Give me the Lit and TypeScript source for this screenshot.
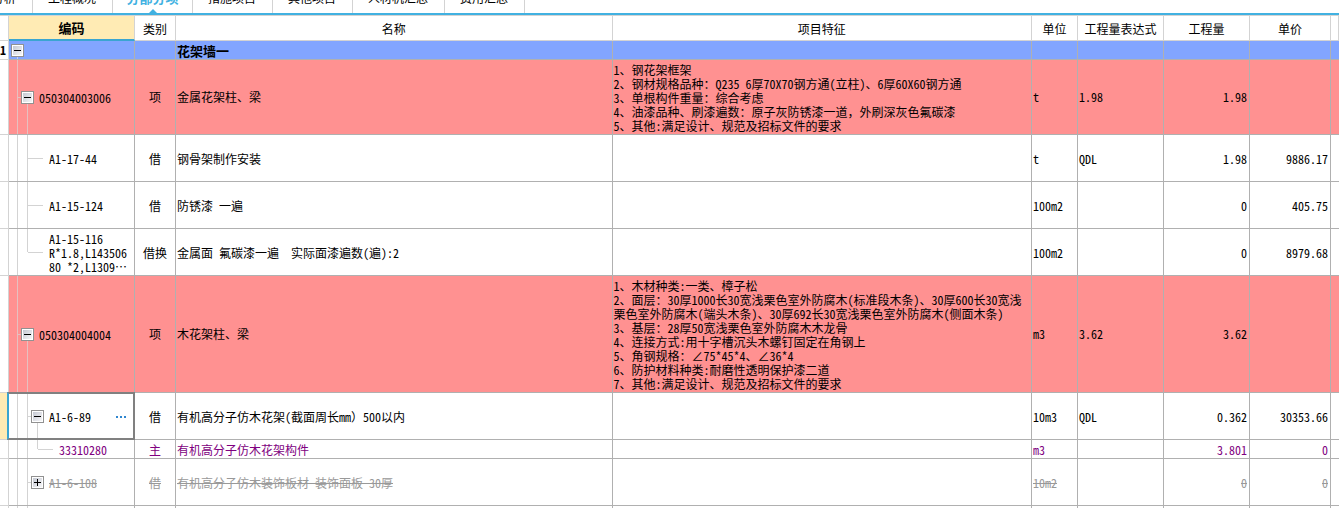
import { LitElement, html, svg, css, nothing } from "lit";
import { customElement, property } from "lit/decorators.js";
import { classMap } from "lit/directives/class-map.js";

type Toggle = "open" | "closed" | "none";

interface Item {
  code: string;
  level: number;
  toggle: Toggle;
  guides: string;
  kind?: string;
  name?: string;
  feature?: string;
  unit?: string;
  expr?: string;
  qty?: string;
  price?: string;
  tone?: string;
  rowNo?: string;
  size: string;
}

const TABS = ["造价分析", "工程概况", "分部分项", "措施项目", "其他项目", "人材机汇总", "费用汇总"];

const HEADERS = ["类别", "名称", "项目特征", "单位", "工程量表达式", "工程量", "单价"];

const ITEMS: Item[] = [
  { code: "", level: 0, toggle: "open", guides: "root", name: "花架墙一", tone: "section", rowNo: "1", size: "short" },
  {
    code: "050304003006", level: 1, toggle: "open", guides: "group", kind: "项", name: "金属花架柱、梁",
    feature:
      "1、钢花架框架\n2、钢材规格品种：Q235 6厚70X70钢方通(立柱)、6厚60X60钢方通\n3、单根构件重量：综合考虑\n4、油漆品种、刷漆遍数：原子灰防锈漆一道，外刷深灰色氟碳漆\n5、其他:满足设计、规范及招标文件的要求",
    unit: "t", expr: "1.98", qty: "1.98", tone: "bill", size: "tall",
  },
  { code: "A1-17-44", level: 2, toggle: "none", guides: "leaf", kind: "借", name: "钢骨架制作安装", unit: "t", expr: "QDL", qty: "1.98", price: "9886.17", size: "mid" },
  { code: "A1-15-124", level: 2, toggle: "none", guides: "leaf", kind: "借", name: "防锈漆 一遍", unit: "100m2", qty: "0", price: "405.75", size: "mid" },
  { code: "A1-15-116\nR*1.8,L14350680 *2,L1309…", level: 2, toggle: "none", guides: "last", kind: "借换", name: "金属面 氟碳漆一遍  实际面漆遍数(遍):2", unit: "100m2", qty: "0", price: "8979.68", size: "mid" },
  {
    code: "050304004004", level: 1, toggle: "open", guides: "group", kind: "项", name: "木花架柱、梁",
    feature:
      "1、木材种类:一类、樟子松\n2、面层：30厚1000长30宽浅栗色室外防腐木(标准段木条)、30厚600长30宽浅栗色室外防腐木(端头木条)、30厚692长30宽浅栗色室外防腐木(侧面木条)\n3、基层：28厚50宽浅栗色室外防腐木木龙骨\n4、连接方式:用十字槽沉头木螺钉固定在角钢上\n5、角钢规格：∠75*45*4、∠36*4\n6、防护材料种类:耐磨性透明保护漆二道\n7、其他:满足设计、规范及招标文件的要求",
    unit: "m3", expr: "3.62", qty: "3.62", tone: "bill", size: "tall",
  },
  { code: "A1-6-89", level: 2, toggle: "open", guides: "branch", kind: "借", name: "有机高分子仿木花架(截面周长mm）500以内", unit: "10m3", expr: "QDL", qty: "0.362", price: "30353.66", tone: "selected", size: "mid" },
  { code: "33310280", level: 3, toggle: "none", guides: "deep", kind: "主", name: "有机高分子仿木花架构件", unit: "m3", qty: "3.801", price: "0", tone: "main", size: "short" },
  { code: "A1-6-108", level: 2, toggle: "closed", guides: "twig", kind: "借", name: "有机高分子仿木装饰板材 装饰面板 30厚", unit: "10m2", qty: "0", price: "0", tone: "removed", size: "mid" },
  { code: "", level: 2, toggle: "none", guides: "pass", size: "mid" },
];

/* Full-width punctuation keeps its full advance; everything else uses half-width Latin forms. */
const mixed = (text = "") =>
  text.split(/([，）])/).map((part) => (/^[，）]$/.test(part) ? html`<span class="full">${part}</span>` : part));

@customElement("tree-toggle")
class TreeToggle extends LitElement {
  @property() state: Toggle = "open";

  static styles = css`
    :host {
      display: block;
      flex: none;
      white-space: normal;
    }
    .box {
      display: block;
      width: 13px;
      height: 13px;
      padding: 0;
      border: 0;
      background: none;
    }
    .glyph {
      display: block;
    }
  `;

  render() {
    const closed = this.state === "closed";
    return html`<button class="box" type="button" aria-label=${closed ? "展开" : "折叠"}>
      <svg class="glyph" width="13" height="13" viewBox="0 0 13 13" shape-rendering="crispEdges">
        <defs>
          <linearGradient id="face" x1="0" y1="0" x2="1" y2="1">
            <stop offset="0" stop-color="#c4c8d2" />
            <stop offset="1" stop-color="#f6f6f8" />
          </linearGradient>
        </defs>
        <rect width="13" height="13" fill="#919191" />
        <rect x="1" y="1" width="11" height="11" fill="#fff" />
        <rect x="2" y="2" width="9" height="9" fill="url(#face)" />
        <rect x="3" y="6" width="7" height="1" fill="#000" />
        ${closed ? svg`<rect x="6" y="3" width="1" height="7" fill="#000" />` : nothing}
      </svg>
    </button>`;
  }
}

@customElement("app-root")
class AppRoot extends LitElement {
  static styles = css`
    :host {
      display: block;
      height: 100vh;
      overflow: hidden;
      background: #fff;
      color: #000;
      font: 12px/14px "Noto Sans CJK SC", sans-serif;
      font-feature-settings: "hwid";
    }
    .full {
      font-feature-settings: normal;
    }
    .tabs {
      display: flex;
      align-items: flex-end;
      height: 13px;
      overflow: hidden;
      border-bottom: 2px solid #41b1e1;
    }
    .tab {
      flex: none;
      display: flex;
      flex-direction: column;
      justify-content: flex-end;
      align-items: center;
      height: 32px;
      padding: 0 16px 8px 15px;
      border-right: 1px solid #d3d3d3;
      box-sizing: border-box;
      color: #000;
      text-decoration: none;
    }
    .tab.first {
      margin-left: -47px;
    }
    .tab.active {
      width: 80px;
      padding: 0;
      color: #41b1e1;
      font-size: 13px;
      font-weight: 700;
    }
    .marker {
      display: block;
      margin-top: 4px;
    }
    .sheet {
      width: 100%;
      table-layout: fixed;
      border-collapse: separate;
      border-spacing: 0;
      border-top: 1px solid #d3d3d3;
    }
    .c-no { width: 9px; }
    .c-code { width: 126px; }
    .c-kind { width: 41px; }
    .c-name { width: 32.6%; }
    .c-unit { width: 46px; }
    .c-num { width: 86px; }
    .c-price { width: 81px; }
    .c-rest { width: 8px; }
    .head {
      height: 25px;
      padding: 2px 0 0;
      box-sizing: border-box;
      border-right: 1px solid #d3d3d3;
      border-bottom: 1px solid #d3d3d3;
      font-weight: 400;
      text-align: center;
      white-space: nowrap;
      overflow: hidden;
    }
    .head.code {
      padding-top: 0;
      background: #ffebb4;
      border-bottom: 2px solid #3aa5d1;
      font-size: 13px;
      font-weight: 700;
    }
    .cell {
      padding: 1px 2px 0 1px;
      border-right: 1px solid #b0b0b0;
      border-bottom: 1px solid #b0b0b0;
      vertical-align: middle;
      white-space: pre-wrap;
      box-sizing: border-box;
    }
    .short .cell { height: 19px; }
    .mid .cell { height: 47px; }
    .tall .cell {
      height: 75px;
      padding: 2px 2px 2px 1px;
    }
    .tall .feature {
      padding-top: 3px;
      padding-bottom: 1px;
    }
    .row .no {
      padding: 0;
      border-color: #d3d3d3;
      background: #fff;
      font-weight: 700;
    }
    .row .edge {
      border-right: 0;
      padding: 0;
    }
    .row .kind {
      padding-left: 0;
      padding-right: 0;
      text-align: center;
    }
    .num { text-align: right; }
    .row .code {
      --line: linear-gradient(#d3d3d3, #d3d3d3);
      padding-top: 0;
      padding-bottom: 0;
      background-repeat: no-repeat;
    }
    .row.bill .code {
      --line: linear-gradient(#e6c0c0, #e6c0c0);
    }
    .row.section .code {
      --line: linear-gradient(#c4cfee, #c4cfee);
    }
    .row .level0 { padding-left: 2px; }
    .row .level1 { padding-left: 12px; }
    .row .level2 { padding-left: 22px; }
    .row .level3 { padding-left: 32px; }
    .root {
      background-image: var(--line);
      background-size: 1px 50%;
      background-position: 8px 100%;
    }
    .group {
      background-image: var(--line), var(--line), var(--line);
      background-size: 1px 100%, 3px 1px, 1px 50%;
      background-position: 8px 0, 9px 50%, 18px 100%;
    }
    .leaf {
      background-image: var(--line), var(--line), var(--line);
      background-size: 1px 100%, 1px 100%, 15px 1px;
      background-position: 8px 0, 18px 0, 19px 50%;
    }
    .last {
      background-image: var(--line), var(--line), var(--line);
      background-size: 1px 100%, 1px 50%, 15px 1px;
      background-position: 8px 0, 18px 0, 19px 50%;
    }
    .branch {
      background-image: var(--line), var(--line), var(--line), var(--line);
      background-size: 1px 100%, 1px 100%, 3px 1px, 1px 50%;
      background-position: 8px 0, 18px 0, 19px 50%, 28px 100%;
    }
    .deep {
      background-image: var(--line), var(--line), var(--line), var(--line);
      background-size: 1px 100%, 1px 100%, 1px 50%, 15px 1px;
      background-position: 8px 0, 18px 0, 28px 0, 29px 50%;
    }
    .twig {
      background-image: var(--line), var(--line), var(--line);
      background-size: 1px 100%, 1px 100%, 3px 1px;
      background-position: 8px 0, 18px 0, 19px 50%;
    }
    .pass {
      background-image: var(--line), var(--line);
      background-size: 1px 100%, 1px 100%;
      background-position: 8px 0, 18px 0;
    }
    .node {
      display: flex;
      align-items: center;
      gap: 5px;
    }
    .gap {
      flex: none;
      width: 13px;
    }
    .label {
      flex: 1;
      min-width: 0;
      word-break: break-all;
      padding-top: 1px;
    }
    .section .cell { background-color: #82a5ff; }
    .section .name {
      font-size: 13px;
      font-weight: 700;
    }
    .bill .cell { background-color: #ff9191; }
    .section .no, .bill .no { background-color: #fff; }
    .main .cell { color: #800080; }
    .removed .cell {
      color: #999;
      text-decoration: line-through;
    }
    .selected .no { background-color: #ffebb4; }
    .selected .code { position: relative; }
    .selected .code::after {
      content: "";
      position: absolute;
      inset: -1px -1px -1px -2px;
      border: 2px solid #808080;
      border-left-color: #3aa5d1;
      pointer-events: none;
    }
    .more {
      flex: none;
      margin-right: 4px;
      padding: 0;
      border: 0;
      background: none;
      line-height: 0;
    }
  `;

  private row(item: Item) {
    const tone = item.tone ?? "plain";
    return html`<tr class=${classMap({ row: true, [tone]: true, [item.size]: true })}>
      <td class="cell no">${item.rowNo ?? ""}</td>
      <td class="cell code level${item.level} ${item.guides}"><div class="node">${
        item.toggle === "none"
          ? html`<span class="gap"></span>`
          : html`<tree-toggle .state=${item.toggle}></tree-toggle>`
      }${item.code ? html`<span class="label">${item.code}</span>` : nothing}${
        tone === "selected"
          ? html`<button class="more" type="button" aria-label="更多"><svg width="12" height="2" viewBox="0 0 12 2"><path fill="#2f86cf" d="M0 0h2v2H0zM4 0h2v2H4zM8 0h2v2H8z" /></svg></button>`
          : nothing
      }</div></td>
      <td class="cell kind">${item.kind ?? ""}</td>
      <td class="cell name">${mixed(item.name)}</td>
      <td class="cell feature">${mixed(item.feature)}</td>
      <td class="cell">${item.unit ?? ""}</td>
      <td class="cell">${item.expr ?? ""}</td>
      <td class="cell num">${item.qty ?? ""}</td>
      <td class="cell num">${item.price ?? ""}</td>
      <td class="cell edge"></td>
    </tr>`;
  }

  render() {
    return html`
      <nav class="tabs" lang="zh-CN">
        ${TABS.map(
          (t, i) => html`<a href="#" class=${classMap({ tab: true, first: i === 0, active: i === 2 })}>${t}${
            i === 2
              ? html`<svg class="marker" width="8" height="4" viewBox="0 0 8 4"><path fill="#41b1e1" d="M4 0l4 4H0z" /></svg>`
              : nothing
          }</a>`
        )}
      </nav>
      <table class="sheet" lang="zh-CN">
        <colgroup>
          <col class="c-no" /><col class="c-code" /><col class="c-kind" /><col class="c-name" /><col />
          <col class="c-unit" /><col class="c-num" /><col class="c-num" /><col class="c-price" /><col class="c-rest" />
        </colgroup>
        <thead>
          <tr>
            <th class="head"></th>
            <th class="head code">编码</th>
            ${HEADERS.map((h) => html`<th class="head">${h}</th>`)}
            <th class="head"></th>
          </tr>
        </thead>
        <tbody>
          ${ITEMS.map((item) => this.row(item))}
        </tbody>
      </table>
    `;
  }
}
